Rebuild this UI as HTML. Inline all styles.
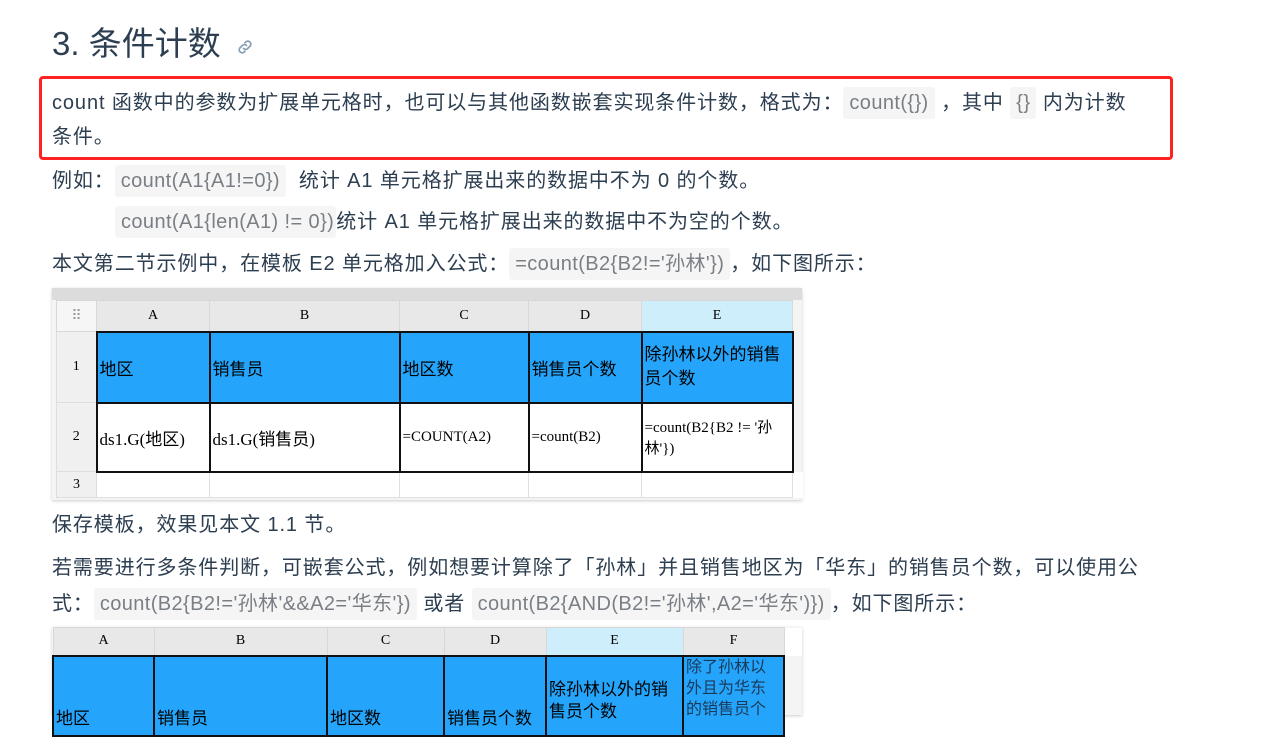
<!DOCTYPE html>
<html><head><meta charset="utf-8"><style>
body{margin:0;width:1261px;height:715px;overflow:hidden;background:#fff;font-family:"Liberation Sans","Noto Sans CJK SC",sans-serif;color:#2c3e50;position:relative}
.p{position:absolute;left:52px;font-size:20px;letter-spacing:0.9px;white-space:nowrap;line-height:34px}
code{font-family:"Liberation Sans","Noto Sans CJK SC",sans-serif;background:#f5f5f5;color:#7a7f85;padding:5px 6px;border-radius:3px;font-size:20px;letter-spacing:0.4px}
h2{position:absolute;left:52px;top:20px;margin:0;font-size:33px;font-weight:normal;line-height:48px}
.box{position:absolute;left:39px;top:76px;width:1128px;height:78px;border:3px solid #f22;border-radius:4px}
table{border-collapse:collapse;position:absolute;font-family:"Liberation Serif","Noto Sans CJK SC",serif;font-size:17px;color:#000;table-layout:fixed}
td{padding:0 2px;overflow:hidden}
.hd td{background:#e8e8e8;text-align:center;border:1px solid #d8d8d8;font-size:14px}
.hd td.sel{background:#cdeefa}
.bl td.c{background:#24a5fb;border:2px solid #111}
.wh td.c{background:#fff;border:2px solid #111}
.rn{background:#f0f0f0;text-align:center;border:1px solid #ddd;font-size:14px}
</style></head><body>
<h2>3. 条件计数</h2>
<svg style="position:absolute;left:236px;top:38px" width="18" height="18" viewBox="0 0 18 18" fill="none" stroke="#8aa0b5" stroke-width="1.8" stroke-linecap="round"><path d="M7.5 10.5a3 3 0 0 0 4.2 0l2.5-2.5a3 3 0 0 0-4.2-4.2l-1 1"/><path d="M10.5 7.5a3 3 0 0 0-4.2 0l-2.5 2.5a3 3 0 0 0 4.2 4.2l1-1"/></svg>
<div class="box"></div>
<div class="p" style="top:86px">count 函数中的参数为扩展单元格时，也可以与其他函数嵌套实现条件计数，格式为：<code>count({})</code> ，其中 <code>{}</code> 内为计数</div>
<div class="p" style="top:120px">条件。</div>
<div class="p" style="top:164px">例如：<code>count(A1{A1!=0})</code>&nbsp; 统计 A1 单元格扩展出来的数据中不为 0 的个数。</div>
<div class="p" style="top:205px;left:115px"><code style="padding:5px 2px 5px 6px">count(A1{len(A1) != 0})</code>统计 A1 单元格扩展出来的数据中不为空的个数。</div>
<div class="p" style="top:247px">本文第二节示例中，在模板 E2 单元格加入公式：<code>=count(B2{B2!='孙林'})</code>，如下图所示：</div>
<div style="position:absolute;left:52px;top:288px;width:750px;height:212px;background:#f4f4f4;box-shadow:0 1px 3px #ccc"></div>
<div style="position:absolute;left:52px;top:288px;width:750px;height:12px;background:#dcdcdc"></div>
<table style="left:56px;top:300px;width:746px">
<colgroup><col style="width:40px"><col style="width:113px"><col style="width:190px"><col style="width:129px"><col style="width:113px"><col style="width:151px"><col style="width:10px"></colgroup>
<tr class="hd" style="height:31px"><td style="background:#f6f6f6;color:#999">⠿</td><td>A</td><td>B</td><td>C</td><td>D</td><td class="sel">E</td><td style="background:#f4f4f4;border:none"></td></tr>
<tr class="bl" style="height:71px"><td class="rn">1</td><td class="c">地区</td><td class="c">销售员</td><td class="c">地区数</td><td class="c">销售员个数</td><td class="c" style="line-height:24px">除孙林以外的销售员个数</td><td></td></tr>
<tr class="wh" style="height:69px"><td class="rn">2</td><td class="c">ds1.G(地区)</td><td class="c">ds1.G(销售员)</td><td class="c" style="font-size:15px">=COUNT(A2)</td><td class="c" style="font-size:15px">=count(B2)</td><td class="c" style="font-size:15px">=count(B2{B2 != '孙林'})</td><td></td></tr>
<tr style="height:26px;background:#fff"><td class="rn">3</td><td style="border:1px solid #e0e0e0"></td><td style="border:1px solid #e0e0e0"></td><td style="border:1px solid #e0e0e0"></td><td style="border:1px solid #e0e0e0"></td><td style="border:1px solid #e0e0e0"></td><td></td></tr>
</table>
<div class="p" style="top:508px">保存模板，效果见本文 1.1 节。</div>
<div class="p" style="top:551px">若需要进行多条件判断，可嵌套公式，例如想要计算除了「孙林」并且销售地区为「华东」的销售员个数，可以使用公</div>
<div class="p" style="top:587px">式：<code>count(B2{B2!='孙林'&amp;&amp;A2='华东'})</code> 或者 <code>count(B2{AND(B2!='孙林',A2='华东')})</code>，如下图所示：</div>
<div style="position:absolute;left:52px;top:627px;width:750px;height:88px;background:#f4f4f4;box-shadow:0 1px 3px #ccc"></div>
<table style="left:52px;top:627px;width:750px">
<colgroup><col style="width:101px"><col style="width:173px"><col style="width:117px"><col style="width:102px"><col style="width:137px"><col style="width:101px"><col style="width:19px"></colgroup>
<tr class="hd" style="height:28px"><td>A</td><td>B</td><td>C</td><td>D</td><td class="sel">E</td><td>F</td><td style="background:#fff;border:none"></td></tr>
<tr class="bl" style="height:80px"><td class="c" style="vertical-align:bottom;padding-bottom:6px">地区</td><td class="c" style="vertical-align:bottom;padding-bottom:6px">销售员</td><td class="c" style="vertical-align:bottom;padding-bottom:6px">地区数</td><td class="c" style="vertical-align:bottom;padding-bottom:6px">销售员个数</td><td class="c" style="vertical-align:top;padding-top:22px;line-height:22px">除孙林以外的销售员个数</td><td class="c" style="vertical-align:top;font-size:16px;line-height:21px;color:#1a3a5a">除了孙林以外且为华东的销售员个</td><td></td></tr>
</table>
</body></html>
